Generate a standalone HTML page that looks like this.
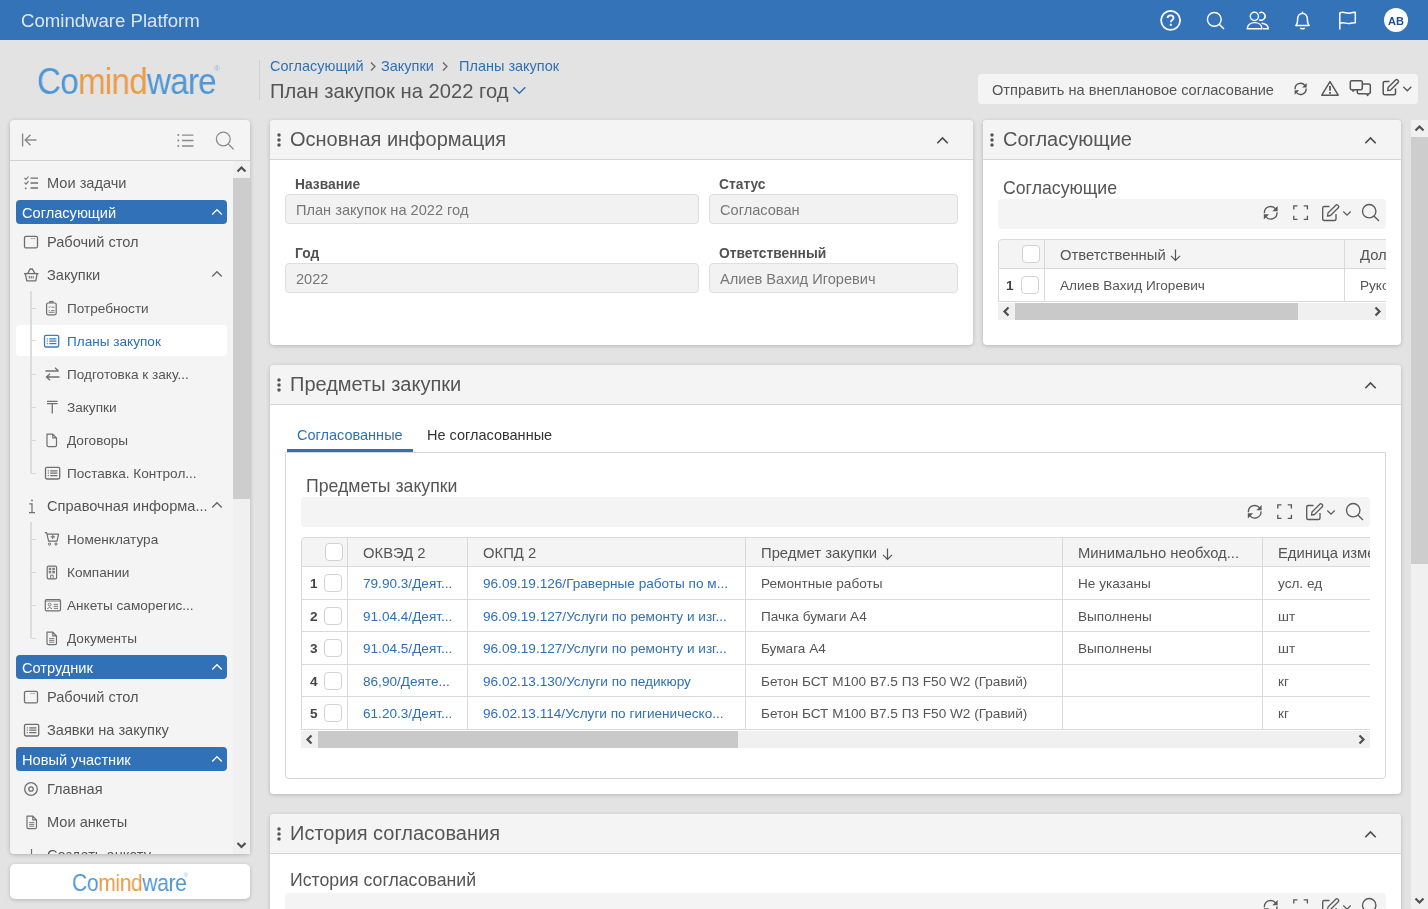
<!DOCTYPE html>
<html><head><meta charset="utf-8"><style>
html,body{margin:0;padding:0}
body{width:1428px;height:909px;overflow:hidden;background:#e3e3e3;position:relative;font-family:"Liberation Sans", sans-serif}
.t{position:absolute;white-space:nowrap;will-change:transform}
.b{position:absolute;box-sizing:border-box}
.i{position:absolute;overflow:visible}
</style></head><body>
<div class="b" style="left:0px;top:0px;width:1428px;height:40px;background:#3473b8"></div>
<div class="t" style="left:20.5px;top:9.06px;font-size:18.6px;line-height:23px;color:#dbe6f3;font-weight:400;">Comindware Platform</div>
<svg class="i" style="left:1158px;top:8px;" width="26" height="26" viewBox="0 0 26 26"><circle cx="12.6" cy="12.3" r="9.5" fill="none" stroke="#fff" stroke-width="1.8"/><path d="M9.6 10.1 C9.6 8.2 11 7.3 12.6 7.3 C14.3 7.3 15.5 8.4 15.5 9.9 C15.5 11.9 12.8 12.1 12.8 14.3" fill="none" stroke="#fff" stroke-width="1.8"/><rect x="11.8" y="15.8" width="2" height="2" fill="#fff"/></svg>
<svg class="i" style="left:1204px;top:9px;" width="24" height="24" viewBox="0 0 24 24"><circle cx="10.3" cy="10.3" r="6.9" fill="none" stroke="#fff" stroke-width="1.45"/><path d="M15.2 15.2 L20 20" stroke="#fff" stroke-width="1.45"/></svg>
<svg class="i" style="left:1244px;top:9px;" width="28" height="24" viewBox="0 0 28 24"><circle cx="10.4" cy="7.3" r="4.1" fill="none" stroke="#fff" stroke-width="1.45"/><path d="M15.2 4 A3.9 3.9 0 1 1 15.2 10.6" fill="none" stroke="#fff" stroke-width="1.45"/><path d="M3.3 19.8 C3.3 15.8 6.5 13.6 10.6 13.6 C14.7 13.6 17.9 15.8 17.9 19.8 Z" fill="none" stroke="#fff" stroke-width="1.45" stroke-linejoin="round"/><path d="M17.6 14.3 C21.6 14.7 24.2 16.6 24.2 19.8 L19 19.8" fill="none" stroke="#fff" stroke-width="1.45"/></svg>
<svg class="i" style="left:1292px;top:9px;" width="22" height="24" viewBox="0 0 22 24"><path d="M3.8 16.5 C5.2 15.2 5.6 13.5 5.6 10.5 C5.6 7 7.6 4.6 10.5 4.4 C13.4 4.6 15.4 7 15.4 10.5 C15.4 13.5 15.8 15.2 17.2 16.5 Z" fill="none" stroke="#fff" stroke-width="1.45" stroke-linejoin="round"/><path d="M10.5 2.6 L10.5 4.4" stroke="#fff" stroke-width="1.45"/><path d="M8.4 18.8 C8.9 20.2 12.1 20.2 12.6 18.8" fill="none" stroke="#fff" stroke-width="1.5"/></svg>
<svg class="i" style="left:1336px;top:9px;" width="24" height="24" viewBox="0 0 24 24"><path d="M3.8 20.5 L3.8 3.5" stroke="#fff" stroke-width="1.5"/><path d="M3.8 4 C7.5 1.8 10.5 5 14 4 C16 3.5 17 3.2 19.3 3.3 L19.3 13.7 C17 13.6 16 13.9 14 14.4 C10.5 15.4 7.5 12.2 3.8 14.4" fill="none" stroke="#fff" stroke-width="1.5" stroke-linejoin="round"/></svg>
<div class="b" style="left:1384px;top:8px;width:24px;height:24px;border-radius:50%;background:#fff"></div>
<div class="t" style="left:1396px;top:13.79px;font-size:11px;line-height:14px;color:#1f4f88;font-weight:700;width:24px;margin-left:-12px;text-align:center;">AB</div>
<div class="t" style="left:37px;top:60px;font-size:36px;line-height:44px;transform:scaleX(0.922);transform-origin:0 0;letter-spacing:-0.8px;color:#4f96d6">Co<span style="color:#ec9b47">mind</span>ware</div>
<div class="t" style="left:214px;top:64px;font-size:8px;line-height:10px;color:#8cb8e4">&#174;</div>
<div class="b" style="left:259px;top:60px;width:1px;height:40px;background:#d2d2d2"></div>
<div class="t" style="left:269.5px;top:56.78px;font-size:14.5px;line-height:18px;color:#2f70b5;font-weight:400;">Согласующий</div>
<svg class="i" style="left:368px;top:59px;" width="10" height="14" viewBox="0 0 10 14"><path d="M3 3.5 L7 7.5 L3 11.5" fill="none" stroke="#666" stroke-width="1.3"/></svg>
<div class="t" style="left:380.5px;top:56.78px;font-size:14.5px;line-height:18px;color:#2f70b5;font-weight:400;">Закупки</div>
<svg class="i" style="left:440px;top:59px;" width="10" height="14" viewBox="0 0 10 14"><path d="M3 3.5 L7 7.5 L3 11.5" fill="none" stroke="#666" stroke-width="1.3"/></svg>
<div class="t" style="left:458.5px;top:56.78px;font-size:14.5px;line-height:18px;color:#2f70b5;font-weight:400;">Планы закупок</div>
<div class="t" style="left:269.5px;top:78.80px;font-size:20.2px;line-height:25px;color:#555;font-weight:400;">План закупок на 2022 год</div>
<svg class="i" style="left:511px;top:84px;" width="16" height="12" viewBox="0 0 16 12"><path d="M2.3 3.3 L8.3 9.3 L14.3 3.3" fill="none" stroke="#2f70b5" stroke-width="1.5"/></svg>
<div class="b" style="left:978px;top:74px;width:440px;height:30px;background:#f4f4f4;border-radius:4px"></div>
<div class="t" style="left:991.5px;top:80.54px;font-size:14.6px;line-height:18px;color:#555;font-weight:400;">Отправить на внеплановое согласование</div>
<div class="b" style="left:1411px;top:120px;width:17px;height:789px;background:#f0f0f0"></div>
<div class="b" style="left:1411px;top:137px;width:17px;height:427px;background:#cdcdcd"></div>
<svg class="i" style="left:1411px;top:120px;" width="17" height="17" viewBox="0 0 17 17"><path d="M4.5 10.5 L8.5 6.5 L12.5 10.5" fill="none" stroke="#505050" stroke-width="2.2"/></svg>
<svg class="i" style="left:1411px;top:892px;" width="17" height="17" viewBox="0 0 17 17"><path d="M4.5 6.5 L8.5 10.5 L12.5 6.5" fill="none" stroke="#505050" stroke-width="2.2"/></svg>
<svg class="i" style="left:1293px;top:81px;" width="16" height="16" viewBox="0 0 16 16"><path d="M2.1 8.2 A5.5 5.5 0 0 1 11.9 4.4" fill="none" stroke="#555" stroke-width="1.35"/><path d="M13.1 7.5 A5.5 5.5 0 0 1 3.3 11.3" fill="none" stroke="#555" stroke-width="1.35"/><path d="M13.7 1.9 L13.7 6.5 L9.1 6.5 Z" fill="#555"/><path d="M1.6 13.8 L1.6 9.2 L6.2 9.2 Z" fill="#555"/></svg>
<svg class="i" style="left:1320px;top:79px;" width="20" height="18" viewBox="0 0 20 18"><path d="M10 2.6 L18.2 16.2 H1.8 Z" fill="none" stroke="#555" stroke-width="1.45" stroke-linejoin="round"/><path d="M10 7 V11.8" stroke="#555" stroke-width="1.8"/><rect x="9.1" y="13" width="1.8" height="1.8" fill="#555"/></svg>
<svg class="i" style="left:1349px;top:79px;" width="24" height="20" viewBox="0 0 24 20"><path d="M2.8 1.8 H11.8 Q13.3 1.8 13.3 3.3 V9.2 Q13.3 10.7 11.8 10.7 H5.5 L4 12.2 L4 10.7 H2.8 Q1.3 10.7 1.3 9.2 V3.3 Q1.3 1.8 2.8 1.8 Z" fill="none" stroke="#555" stroke-width="1.5" stroke-linejoin="round"/><path d="M13.3 5 H19.8 Q21.3 5 21.3 6.5 V13.3 Q21.3 14.8 19.8 14.8 H18.8 L18.8 16.5 L17 14.8 H9.8 Q8.3 14.8 8.3 13.3 V10.7" fill="none" stroke="#555" stroke-width="1.5" stroke-linejoin="round"/></svg>
<svg class="i" style="left:1381px;top:78px;" width="20" height="20" viewBox="0 0 20 20"><path d="M8.5 3.5 H3.7 Q2.2 3.5 2.2 5 V15.2 Q2.2 16.7 3.7 16.7 H13 Q14.5 16.7 14.5 15.2 V10.5" fill="none" stroke="#555" stroke-width="1.5"/><path d="M6.7 12.6 L7.1 9.6 L14.6 2.1 Q15.6 1.1 16.6 2.1 L17.1 2.6 Q18.1 3.6 17.1 4.6 L9.6 12.1 Z" fill="none" stroke="#555" stroke-width="1.4" stroke-linejoin="round"/></svg>
<svg class="i" style="left:1402px;top:85px;" width="12" height="9" viewBox="0 0 12 9"><path d="M1.3 1.8 L5.3 5.8 L9.3 1.8" fill="none" stroke="#555" stroke-width="1.3"/></svg>
<div class="b" style="left:10px;top:120px;width:240px;height:734px;background:#f4f4f4;border-radius:4px;box-shadow:0 1px 4px rgba(0,0,0,0.22);overflow:hidden">
<div class="b" style="left:0;top:40px;width:240px;height:1px;background:#d2d2d2"></div>
</div>
<svg class="i" style="left:20px;top:131px;" width="20" height="18" viewBox="0 0 20 18"><path d="M2.6 2.5 L2.6 15.5" stroke="#8a8a8a" stroke-width="1.4"/><path d="M16.5 9 L5.2 9 M10.5 3.7 L5.2 9 L10.5 14.3" fill="none" stroke="#8a8a8a" stroke-width="1.4"/></svg>
<svg class="i" style="left:175px;top:131px;" width="22" height="18" viewBox="0 0 22 18"><circle cx="3.3" cy="4.1" r="1" fill="#8a8a8a"/><circle cx="3.3" cy="9.5" r="1" fill="#8a8a8a"/><circle cx="3.3" cy="15" r="1" fill="#8a8a8a"/><path d="M7 4.1 H18.5 M7 9.5 H18.5 M7 15 H18.5" stroke="#8a8a8a" stroke-width="1.3"/></svg>
<svg class="i" style="left:214px;top:130px;" width="22" height="22" viewBox="0 0 22 22"><circle cx="9.3" cy="9" r="6.9" fill="none" stroke="#8a8a8a" stroke-width="1.3"/><path d="M14.2 13.9 L19.5 19.2" stroke="#8a8a8a" stroke-width="1.3"/></svg>
<div class="b" style="left:233px;top:161px;width:17px;height:693px;background:#f0f0f0"></div>
<div class="b" style="left:233px;top:178px;width:18px;height:321px;background:#cdcdcd"></div>
<svg class="i" style="left:233px;top:161px;" width="17" height="17" viewBox="0 0 17 17"><path d="M4.5 10.5 L8.5 6.5 L12.5 10.5" fill="none" stroke="#505050" stroke-width="2.2"/></svg>
<svg class="i" style="left:233px;top:837px;" width="17" height="17" viewBox="0 0 17 17"><path d="M4.5 6 L8.5 10 L12.5 6" fill="none" stroke="#505050" stroke-width="2.2"/></svg>
<div style="position:absolute;left:0;top:0;width:1428px;height:909px;clip-path:inset(160px 1195px 55px 10px)">
<svg class="i" style="left:22.5px;top:173.5px;" width="18" height="18" viewBox="0 0 18 18"><path d="M1.5 4 L3 5.5 L5.5 2.5 M1.5 8.7 L3 10.2 L5.5 7.2" fill="none" stroke="#6f6f6f" stroke-width="1.1"/><circle cx="2.7" cy="14.3" r="0.9" fill="#6f6f6f"/><path d="M7.5 4.2 H15 M7.5 9 H15 M7.5 14 H15" stroke="#6f6f6f" stroke-width="1.3"/></svg>
<div class="t" style="left:46.5px;top:174.24px;font-size:14.6px;line-height:18px;color:#555;font-weight:400;">Мои задачи</div>
<div class="b" style="left:16px;top:200px;width:211px;height:24px;background:#3171b7;border-radius:4px"></div>
<div class="t" style="left:21.5px;top:203.54px;font-size:14.6px;line-height:18px;color:#fff;font-weight:400;">Согласующий</div>
<svg class="i" style="left:211px;top:207px;" width="12" height="10" viewBox="0 0 12 10"><path d="M1.2 7.5 L6 2.7 L10.8 7.5" fill="none" stroke="#fff" stroke-width="1.3"/></svg>
<svg class="i" style="left:22.5px;top:232.5px;" width="18" height="18" viewBox="0 0 18 18"><rect x="1.5" y="3.3" width="13" height="11.6" rx="1.5" fill="none" stroke="#6f6f6f" stroke-width="1.3"/><path d="M9.5 5.6 H10.3 M11.3 5.6 H12.1 M7.7 5.6 H8.5" stroke="#6f6f6f" stroke-width="1"/></svg>
<div class="t" style="left:46.5px;top:233.24px;font-size:14.6px;line-height:18px;color:#555;font-weight:400;">Рабочий стол</div>
<svg class="i" style="left:22.5px;top:265.5px;" width="18" height="18" viewBox="0 0 18 18"><path d="M1 7.6 H15.5" stroke="#6f6f6f" stroke-width="1.3"/><path d="M2.3 7.6 L3.8 14.8 H12.7 L14.2 7.6" fill="none" stroke="#6f6f6f" stroke-width="1.3" stroke-linejoin="round"/><path d="M4.7 7.4 L7.2 3 H9.3 L11.8 7.4" fill="none" stroke="#6f6f6f" stroke-width="1.3"/><path d="M6.3 10 V12.5 M8.25 10 V12.5 M10.2 10 V12.5" stroke="#6f6f6f" stroke-width="1.1"/></svg>
<div class="t" style="left:46.5px;top:266.24px;font-size:14.6px;line-height:18px;color:#555;font-weight:400;">Закупки</div>
<svg class="i" style="left:210.5px;top:269.0px;" width="12" height="10" viewBox="0 0 12 10"><path d="M1.2 7.5 L6 2.7 L10.8 7.5" fill="none" stroke="#666" stroke-width="1.3"/></svg>
<div class="b" style="left:30px;top:291px;width:1.5px;height:182px;background:#dcdcdc"></div>
<div class="b" style="left:31px;top:307.5px;width:5px;height:1.0px;background:#d8d8d8"></div>
<svg class="i" style="left:45.0px;top:298.5px;" width="14" height="18" viewBox="0 0 14 18"><rect x="1.6" y="4" width="9.6" height="11.8" rx="1.5" fill="none" stroke="#6f6f6f" stroke-width="1.2"/><path d="M4.8 4 V2.6 H8 V4" fill="none" stroke="#6f6f6f" stroke-width="1.1"/><path d="M3.6 7.8 L4.3 8.5 L5.5 7.2 M6.5 8.2 H9.5 M3.6 11.6 H4.6 M6.2 11.6 H9.5 M3.6 13.3 H9.5" fill="none" stroke="#6f6f6f" stroke-width="0.9"/></svg>
<div class="t" style="left:66.5px;top:300.09px;font-size:13.6px;line-height:17px;color:#555;font-weight:400;">Потребности</div>
<div class="b" style="left:16px;top:325px;width:211px;height:31px;background:#fff;border-radius:4px"></div>
<div class="b" style="left:31px;top:340px;width:5px;height:1px;background:#d8d8d8"></div>
<svg class="i" style="left:43px;top:331.5px;" width="18" height="18" viewBox="0 0 18 18"><rect x="1.5" y="3.4" width="14.2" height="11.6" rx="1.4" fill="none" stroke="#3a7cc2" stroke-width="1.3"/><path d="M3.8 6.8 H4.8 M3.8 9.2 H4.8 M3.8 11.6 H4.8 M6.2 6.8 H13.4 M6.2 9.2 H13.4 M6.2 11.6 H13.4" stroke="#3a7cc2" stroke-width="1.2"/></svg>
<div class="t" style="left:66.5px;top:333.29px;font-size:13.6px;line-height:17px;color:#2f70b5;font-weight:400;">Планы закупок</div>
<div class="b" style="left:30px;top:291px;width:1.5px;height:65px;background:#dcdcdc"></div>
<div class="b" style="left:31px;top:373.5px;width:5px;height:1.0px;background:#d8d8d8"></div>
<svg class="i" style="left:43.5px;top:364.5px;" width="18" height="18" viewBox="0 0 18 18"><path d="M1.5 6 H14.5 M11 2.8 L14.5 6 M15.5 12 H2.5 M6 8.8 L2.5 12 L6 15.2" fill="none" stroke="#6f6f6f" stroke-width="1.3"/></svg>
<div class="t" style="left:66.5px;top:366.09px;font-size:13.6px;line-height:17px;color:#555;font-weight:400;">Подготовка к заку...</div>
<div class="b" style="left:31px;top:406.5px;width:5px;height:1.0px;background:#d8d8d8"></div>
<svg class="i" style="left:45.0px;top:397.5px;" width="14" height="18" viewBox="0 0 14 18"><path d="M2 3.3 H12.5 M2 5.6 H12.5 M7.25 5.6 V15.5" fill="none" stroke="#6f6f6f" stroke-width="1.3"/></svg>
<div class="t" style="left:66.5px;top:399.09px;font-size:13.6px;line-height:17px;color:#555;font-weight:400;">Закупки</div>
<div class="b" style="left:31px;top:439.5px;width:5px;height:1.0px;background:#d8d8d8"></div>
<svg class="i" style="left:45.0px;top:430.5px;" width="14" height="18" viewBox="0 0 14 18"><path d="M2 3.2 H7.8 L11.5 6.9 V14.3 Q11.5 15.6 10.2 15.6 H3.3 Q2 15.6 2 14.3 Z M7.8 3.2 V6.9 H11.5" fill="none" stroke="#6f6f6f" stroke-width="1.2" stroke-linejoin="round"/></svg>
<div class="t" style="left:66.5px;top:432.09px;font-size:13.6px;line-height:17px;color:#555;font-weight:400;">Договоры</div>
<div class="b" style="left:31px;top:472.5px;width:5px;height:1.0px;background:#d8d8d8"></div>
<svg class="i" style="left:43.5px;top:463.5px;" width="18" height="18" viewBox="0 0 18 18"><rect x="1.5" y="3.4" width="14.2" height="11.6" rx="1.4" fill="none" stroke="#6f6f6f" stroke-width="1.3"/><path d="M3.8 6.8 H4.8 M3.8 9.2 H4.8 M3.8 11.6 H4.8 M6.2 6.8 H13.4 M6.2 9.2 H13.4 M6.2 11.6 H13.4" stroke="#6f6f6f" stroke-width="1.2"/></svg>
<div class="t" style="left:66.5px;top:465.09px;font-size:13.6px;line-height:17px;color:#555;font-weight:400;">Поставка. Контрол...</div>
<svg class="i" style="left:22.5px;top:496.5px;" width="14" height="18" viewBox="0 0 14 18"><circle cx="9" cy="3.4" r="0.9" fill="#6f6f6f"/><path d="M6.3 6.8 H9 V15.6 M6 15.6 H12" fill="none" stroke="#6f6f6f" stroke-width="1.2"/></svg>
<div class="t" style="left:46.5px;top:497.24px;font-size:14.6px;line-height:18px;color:#555;font-weight:400;">Справочная информа...</div>
<svg class="i" style="left:210.5px;top:500.0px;" width="12" height="10" viewBox="0 0 12 10"><path d="M1.2 7.5 L6 2.7 L10.8 7.5" fill="none" stroke="#666" stroke-width="1.3"/></svg>
<div class="b" style="left:30px;top:522px;width:1.5px;height:116px;background:#dcdcdc"></div>
<div class="b" style="left:31px;top:538.5px;width:5px;height:1.0px;background:#d8d8d8"></div>
<svg class="i" style="left:43.5px;top:529.5px;" width="18" height="18" viewBox="0 0 18 18"><path d="M0.8 2.6 H2.6 L4.6 11.2 H13 L14.6 4.2 H3.4" fill="none" stroke="#6f6f6f" stroke-width="1.2" stroke-linejoin="round"/><path d="M8.8 4.8 V9 M6.7 6.9 H10.9" stroke="#6f6f6f" stroke-width="1.1"/><circle cx="5.5" cy="14" r="1.1" fill="none" stroke="#6f6f6f" stroke-width="1"/><circle cx="12" cy="14" r="1.1" fill="none" stroke="#6f6f6f" stroke-width="1"/></svg>
<div class="t" style="left:66.5px;top:531.09px;font-size:13.6px;line-height:17px;color:#555;font-weight:400;">Номенклатура</div>
<div class="b" style="left:31px;top:571.5px;width:5px;height:1.0px;background:#d8d8d8"></div>
<svg class="i" style="left:45.0px;top:562.5px;" width="14" height="18" viewBox="0 0 14 18"><rect x="2.2" y="3.2" width="9.4" height="12.6" rx="1.3" fill="none" stroke="#6f6f6f" stroke-width="1.2"/><rect x="4.2" y="5.2" width="1.6" height="1.6" fill="none" stroke="#6f6f6f" stroke-width="0.8"/><rect x="7.8" y="5.2" width="1.6" height="1.6" fill="none" stroke="#6f6f6f" stroke-width="0.8"/><rect x="4.2" y="8.3" width="1.6" height="1.6" fill="none" stroke="#6f6f6f" stroke-width="0.8"/><rect x="7.8" y="8.3" width="1.6" height="1.6" fill="none" stroke="#6f6f6f" stroke-width="0.8"/><path d="M5.6 15.6 V12.2 H8.2 V15.6" fill="none" stroke="#6f6f6f" stroke-width="0.9"/></svg>
<div class="t" style="left:66.5px;top:564.09px;font-size:13.6px;line-height:17px;color:#555;font-weight:400;">Компании</div>
<div class="b" style="left:31px;top:604.5px;width:5px;height:1.0px;background:#d8d8d8"></div>
<svg class="i" style="left:43.5px;top:595.5px;" width="18" height="18" viewBox="0 0 18 18"><rect x="1.3" y="3.6" width="15.2" height="11.2" rx="1.3" fill="none" stroke="#6f6f6f" stroke-width="1.2"/><path d="M1.3 5.1 H16.5" stroke="#6f6f6f" stroke-width="0.8"/><circle cx="5.6" cy="8.6" r="1.4" fill="none" stroke="#6f6f6f" stroke-width="0.9"/><path d="M3.2 12.8 Q5.6 9.9 8 12.8 M9.8 8.4 H14 M9.8 10.4 H14 M9.8 12.4 H14" fill="none" stroke="#6f6f6f" stroke-width="0.9"/></svg>
<div class="t" style="left:66.5px;top:597.09px;font-size:13.6px;line-height:17px;color:#555;font-weight:400;">Анкеты саморегис...</div>
<div class="b" style="left:31px;top:637.5px;width:5px;height:1.0px;background:#d8d8d8"></div>
<svg class="i" style="left:45.0px;top:628.5px;" width="14" height="18" viewBox="0 0 14 18"><path d="M2 3.2 H7.8 L11.5 6.9 V14.3 Q11.5 15.6 10.2 15.6 H3.3 Q2 15.6 2 14.3 Z M7.8 3.2 V6.9 H11.5" fill="none" stroke="#6f6f6f" stroke-width="1.2" stroke-linejoin="round"/><path d="M4.2 9.6 H9.3 M4.2 11.4 H9.3 M4.2 13.2 H9.3" stroke="#6f6f6f" stroke-width="0.9"/></svg>
<div class="t" style="left:66.5px;top:630.09px;font-size:13.6px;line-height:17px;color:#555;font-weight:400;">Документы</div>
<div class="b" style="left:16px;top:655px;width:211px;height:24px;background:#3171b7;border-radius:4px"></div>
<div class="t" style="left:21.5px;top:658.54px;font-size:14.6px;line-height:18px;color:#fff;font-weight:400;">Сотрудник</div>
<svg class="i" style="left:211px;top:662px;" width="12" height="10" viewBox="0 0 12 10"><path d="M1.2 7.5 L6 2.7 L10.8 7.5" fill="none" stroke="#fff" stroke-width="1.3"/></svg>
<svg class="i" style="left:22.5px;top:687.5px;" width="18" height="18" viewBox="0 0 18 18"><rect x="1.5" y="3.3" width="13" height="11.6" rx="1.5" fill="none" stroke="#6f6f6f" stroke-width="1.3"/><path d="M9.5 5.6 H10.3 M11.3 5.6 H12.1 M7.7 5.6 H8.5" stroke="#6f6f6f" stroke-width="1"/></svg>
<div class="t" style="left:46.5px;top:688.24px;font-size:14.6px;line-height:18px;color:#555;font-weight:400;">Рабочий стол</div>
<svg class="i" style="left:22.5px;top:720.5px;" width="18" height="18" viewBox="0 0 18 18"><rect x="1.5" y="3.4" width="14.2" height="11.6" rx="1.4" fill="none" stroke="#6f6f6f" stroke-width="1.3"/><path d="M3.8 6.8 H4.8 M3.8 9.2 H4.8 M3.8 11.6 H4.8 M6.2 6.8 H13.4 M6.2 9.2 H13.4 M6.2 11.6 H13.4" stroke="#6f6f6f" stroke-width="1.2"/></svg>
<div class="t" style="left:46.5px;top:721.24px;font-size:14.6px;line-height:18px;color:#555;font-weight:400;">Заявки на закупку</div>
<div class="b" style="left:16px;top:747px;width:211px;height:24px;background:#3171b7;border-radius:4px"></div>
<div class="t" style="left:21.5px;top:750.54px;font-size:14.6px;line-height:18px;color:#fff;font-weight:400;">Новый участник</div>
<svg class="i" style="left:211px;top:754px;" width="12" height="10" viewBox="0 0 12 10"><path d="M1.2 7.5 L6 2.7 L10.8 7.5" fill="none" stroke="#fff" stroke-width="1.3"/></svg>
<svg class="i" style="left:22.5px;top:779.5px;" width="18" height="18" viewBox="0 0 18 18"><circle cx="8" cy="9" r="6.3" fill="none" stroke="#6f6f6f" stroke-width="1.3"/><circle cx="8" cy="9" r="2.2" fill="none" stroke="#6f6f6f" stroke-width="1.3"/></svg>
<div class="t" style="left:46.5px;top:780.24px;font-size:14.6px;line-height:18px;color:#555;font-weight:400;">Главная</div>
<svg class="i" style="left:24.5px;top:812.5px;" width="14" height="18" viewBox="0 0 14 18"><path d="M2 3.2 H7.8 L11.5 6.9 V14.3 Q11.5 15.6 10.2 15.6 H3.3 Q2 15.6 2 14.3 Z M7.8 3.2 V6.9 H11.5" fill="none" stroke="#6f6f6f" stroke-width="1.2" stroke-linejoin="round"/><path d="M4.2 9.6 H9.3 M4.2 11.4 H9.3 M4.2 13.2 H9.3" stroke="#6f6f6f" stroke-width="0.9"/></svg>
<div class="t" style="left:46.5px;top:813.24px;font-size:14.6px;line-height:18px;color:#555;font-weight:400;">Мои анкеты</div>
<svg class="i" style="left:24.5px;top:845.5px;" width="14" height="18" viewBox="0 0 14 18"><path d="M6.5 3 V15 M0.5 9 H12.5" stroke="#6f6f6f" stroke-width="1.2"/></svg>
<div class="t" style="left:46.5px;top:846.24px;font-size:14.6px;line-height:18px;color:#555;font-weight:400;">Создать анкету</div>
</div>
<div class="b" style="left:10px;top:864px;width:240px;height:35px;background:#fff;border-radius:5px;box-shadow:0 1px 4px rgba(0,0,0,0.2)"></div>
<div class="t" style="left:71.5px;top:867.5px;font-size:24px;line-height:30px;transform:scaleX(0.876);transform-origin:0 0;letter-spacing:-0.4px;color:#4f96d6">Co<span style="color:#ec9b47">mind</span>ware</div>
<div class="t" style="left:184px;top:872px;font-size:5px;line-height:6px;color:#8cb8e4">&#174;</div>
<div class="b" style="left:270px;top:120px;width:703px;height:225px;background:#fff;border-radius:4px;box-shadow:0 1px 4px rgba(0,0,0,0.2);overflow:hidden"><div class="b" style="left:0;top:0;width:100%;height:40px;background:#f4f4f4;border-bottom:1px solid #d6d6d6"></div></div>
<svg class="i" style="left:276px;top:131px;" width="6" height="18" viewBox="0 0 6 18"><circle cx="3" cy="3.9" r="1.75" fill="#555"/><circle cx="3" cy="9" r="1.75" fill="#555"/><circle cx="3" cy="14.1" r="1.75" fill="#555"/></svg>
<div class="t" style="left:290px;top:127.17px;font-size:20px;line-height:25px;color:#555;font-weight:400;">Основная информация</div>
<svg class="i" style="left:936px;top:134px;" width="14" height="12" viewBox="0 0 14 12"><path d="M1.3 9.2 L6.5 4 L11.7 9.2" fill="none" stroke="#4a4a4a" stroke-width="1.6"/></svg>
<div class="t" style="left:295.3px;top:175.52px;font-size:13.8px;line-height:17px;color:#525252;font-weight:700;">Название</div>
<div class="b" style="left:285px;top:194px;width:414px;height:30px;background:#f2f2f2;border:1px solid #dedede;border-radius:4px"></div>
<div class="t" style="left:295.9px;top:200.84px;font-size:14.6px;line-height:18px;color:#777;font-weight:400;">План закупок на 2022 год</div>
<div class="t" style="left:719.3px;top:175.52px;font-size:13.8px;line-height:17px;color:#525252;font-weight:700;">Статус</div>
<div class="b" style="left:709px;top:194px;width:249px;height:30px;background:#f2f2f2;border:1px solid #dedede;border-radius:4px"></div>
<div class="t" style="left:719.9px;top:200.84px;font-size:14.6px;line-height:18px;color:#777;font-weight:400;">Согласован</div>
<div class="t" style="left:295.3px;top:244.52px;font-size:13.8px;line-height:17px;color:#525252;font-weight:700;">Год</div>
<div class="b" style="left:285px;top:263px;width:414px;height:30px;background:#f2f2f2;border:1px solid #dedede;border-radius:4px"></div>
<div class="t" style="left:295.9px;top:269.84px;font-size:14.6px;line-height:18px;color:#777;font-weight:400;">2022</div>
<div class="t" style="left:719.3px;top:244.52px;font-size:13.8px;line-height:17px;color:#525252;font-weight:700;">Ответственный</div>
<div class="b" style="left:709px;top:263px;width:249px;height:30px;background:#f2f2f2;border:1px solid #dedede;border-radius:4px"></div>
<div class="t" style="left:719.9px;top:269.84px;font-size:14.6px;line-height:18px;color:#777;font-weight:400;">Алиев Вахид Игоревич</div>
<div class="b" style="left:983px;top:120px;width:418px;height:225px;background:#fff;border-radius:4px;box-shadow:0 1px 4px rgba(0,0,0,0.2);overflow:hidden"><div class="b" style="left:0;top:0;width:100%;height:40px;background:#f4f4f4;border-bottom:1px solid #d6d6d6"></div></div>
<svg class="i" style="left:989px;top:131px;" width="6" height="18" viewBox="0 0 6 18"><circle cx="3" cy="3.9" r="1.75" fill="#555"/><circle cx="3" cy="9" r="1.75" fill="#555"/><circle cx="3" cy="14.1" r="1.75" fill="#555"/></svg>
<div class="t" style="left:1003px;top:127.17px;font-size:20px;line-height:25px;color:#555;font-weight:400;">Согласующие</div>
<svg class="i" style="left:1364px;top:134px;" width="14" height="12" viewBox="0 0 14 12"><path d="M1.3 9.2 L6.5 4 L11.7 9.2" fill="none" stroke="#4a4a4a" stroke-width="1.6"/></svg>
<div class="t" style="left:1002.5px;top:176.67px;font-size:17.7px;line-height:22px;color:#555;font-weight:400;">Согласующие</div>
<div class="b" style="left:998px;top:199px;width:388px;height:30px;background:#f4f4f4;border-radius:4px"></div>
<svg class="i" style="left:1262px;top:204px;" width="18" height="18" viewBox="0 0 18 18"><path d="M2.4 9.2 A6.3 6.3 0 0 1 13.6 4.9" fill="none" stroke="#5a5a5a" stroke-width="1.35"/><path d="M15 8.4 A6.3 6.3 0 0 1 3.8 12.7" fill="none" stroke="#5a5a5a" stroke-width="1.35"/><path d="M15.6 2.0 L15.6 7.3 L10.3 7.3 Z" fill="#5a5a5a"/><path d="M1.8 15.6 L1.8 10.3 L7.1 10.3 Z" fill="#5a5a5a"/></svg>
<svg class="i" style="left:1292px;top:204px;" width="18" height="18" viewBox="0 0 18 18"><path d="M1.8 5.5 V1.8 H5.5 M11.7 1.8 H15.4 V5.5 M15.4 11.7 V15.4 H11.7 M5.5 15.4 H1.8 V11.7" fill="none" stroke="#5a5a5a" stroke-width="1.35"/></svg>
<svg class="i" style="left:1321px;top:203px;" width="20" height="20" viewBox="0 0 20 20"><path d="M8.5 3.5 H3.2 Q1.7 3.5 1.7 5 V16 Q1.7 17.5 3.2 17.5 H13.5 Q15 17.5 15 16 V11" fill="none" stroke="#5a5a5a" stroke-width="1.35"/><path d="M6.5 13.2 L7 10 L14.8 2.2 Q15.8 1.2 16.8 2.2 L17.3 2.7 Q18.3 3.7 17.3 4.7 L9.5 12.5 Z" fill="none" stroke="#5a5a5a" stroke-width="1.3" stroke-linejoin="round"/></svg>
<svg class="i" style="left:1342px;top:210px;" width="12" height="8" viewBox="0 0 12 8"><path d="M1.3 1.5 L5 5.2 L8.7 1.5" fill="none" stroke="#5a5a5a" stroke-width="1.2"/></svg>
<svg class="i" style="left:1361px;top:203px;" width="20" height="20" viewBox="0 0 20 20"><circle cx="8.2" cy="8.2" r="6.7" fill="none" stroke="#5a5a5a" stroke-width="1.35"/><path d="M12.9 12.9 L18 18" stroke="#5a5a5a" stroke-width="1.35"/></svg>
<div style="position:absolute;left:0;top:0;width:1428px;height:909px;clip-path:inset(239px 42px 607px 998px)">
<div class="b" style="left:998px;top:239px;width:402px;height:30px;background:#f4f4f4;border:1px solid #d9d9d9;border-radius:4px 0 0 0"></div>
<div class="b" style="left:998px;top:269px;width:402px;height:33px;background:#fff;border:1px solid #d9d9d9;border-top:none"></div>
<div class="b" style="left:1044px;top:239px;width:1px;height:63px;background:#d9d9d9"></div>
<div class="b" style="left:1344px;top:239px;width:1px;height:63px;background:#d9d9d9"></div>
<div class="b" style="left:1022px;top:245px;width:18px;height:18px;background:#fff;border:1px solid #d2d2d2;border-radius:4px"></div>
<div class="t" style="left:1060px;top:245.67px;font-size:14.8px;line-height:18px;color:#555;font-weight:400;">Ответственный</div>
<svg class="i" style="left:1169px;top:248px;" width="14" height="14" viewBox="0 0 14 14"><path d="M6.5 1.5 V12 M2 7.8 L6.5 12.3 L11 7.8" fill="none" stroke="#555" stroke-width="1.2"/></svg>
<div class="t" style="left:1360px;top:245.67px;font-size:14.8px;line-height:18px;color:#555;font-weight:400;">Должность</div>
<div class="t" style="left:1005.5px;top:277.09px;font-size:13.6px;line-height:17px;color:#444;font-weight:700;">1</div>
<div class="b" style="left:1021px;top:276px;width:18px;height:18px;background:#fff;border:1px solid #d2d2d2;border-radius:4px"></div>
<div class="t" style="left:1060px;top:277.09px;font-size:13.6px;line-height:17px;color:#555;font-weight:400;">Алиев Вахид Игоревич</div>
<div class="t" style="left:1360px;top:277.09px;font-size:13.6px;line-height:17px;color:#555;font-weight:400;">Руководитель</div>
</div>
<div class="b" style="left:998px;top:303px;width:388px;height:17px;background:#f0f0f0"></div>
<div class="b" style="left:1015px;top:303px;width:283px;height:17px;background:#c9c9c9"></div>
<svg class="i" style="left:998px;top:303px;" width="17" height="17" viewBox="0 0 17 17"><path d="M10.5 4.5 L6.5 8.5 L10.5 12.5" fill="none" stroke="#4f4f4f" stroke-width="2.2"/></svg>
<svg class="i" style="left:1369px;top:303px;" width="17" height="17" viewBox="0 0 17 17"><path d="M6.5 4.5 L10.5 8.5 L6.5 12.5" fill="none" stroke="#4f4f4f" stroke-width="2.2"/></svg>
<div class="b" style="left:270px;top:365px;width:1131px;height:429px;background:#fff;border-radius:4px;box-shadow:0 1px 4px rgba(0,0,0,0.2);overflow:hidden"><div class="b" style="left:0;top:0;width:100%;height:40px;background:#f4f4f4;border-bottom:1px solid #d6d6d6"></div></div>
<svg class="i" style="left:276px;top:376px;" width="6" height="18" viewBox="0 0 6 18"><circle cx="3" cy="3.9" r="1.75" fill="#555"/><circle cx="3" cy="9" r="1.75" fill="#555"/><circle cx="3" cy="14.1" r="1.75" fill="#555"/></svg>
<div class="t" style="left:290px;top:372.17px;font-size:20px;line-height:25px;color:#555;font-weight:400;">Предметы закупки</div>
<svg class="i" style="left:1364px;top:379px;" width="14" height="12" viewBox="0 0 14 12"><path d="M1.3 9.2 L6.5 4 L11.7 9.2" fill="none" stroke="#4a4a4a" stroke-width="1.6"/></svg>
<div class="t" style="left:296.5px;top:426.48px;font-size:14.5px;line-height:18px;color:#2f70b5;font-weight:400;">Согласованные</div>
<div class="t" style="left:426.5px;top:426.48px;font-size:14.5px;line-height:18px;color:#333;font-weight:400;">Не согласованные</div>
<div class="b" style="left:285px;top:452px;width:1101px;height:327px;border:1px solid #d6d6d6;border-radius:0 0 4px 4px"></div>
<div class="b" style="left:287px;top:449px;width:126px;height:3px;background:#3171b7"></div>
<div class="t" style="left:305.5px;top:474.67px;font-size:17.7px;line-height:22px;color:#555;font-weight:400;">Предметы закупки</div>
<div class="b" style="left:301px;top:497px;width:1069px;height:30px;background:#f4f4f4;border-radius:4px"></div>
<svg class="i" style="left:1246px;top:503px;" width="18" height="18" viewBox="0 0 18 18"><path d="M2.4 9.2 A6.3 6.3 0 0 1 13.6 4.9" fill="none" stroke="#5a5a5a" stroke-width="1.35"/><path d="M15 8.4 A6.3 6.3 0 0 1 3.8 12.7" fill="none" stroke="#5a5a5a" stroke-width="1.35"/><path d="M15.6 2.0 L15.6 7.3 L10.3 7.3 Z" fill="#5a5a5a"/><path d="M1.8 15.6 L1.8 10.3 L7.1 10.3 Z" fill="#5a5a5a"/></svg>
<svg class="i" style="left:1276px;top:503px;" width="18" height="18" viewBox="0 0 18 18"><path d="M1.8 5.5 V1.8 H5.5 M11.7 1.8 H15.4 V5.5 M15.4 11.7 V15.4 H11.7 M5.5 15.4 H1.8 V11.7" fill="none" stroke="#5a5a5a" stroke-width="1.35"/></svg>
<svg class="i" style="left:1305px;top:502px;" width="20" height="20" viewBox="0 0 20 20"><path d="M8.5 3.5 H3.2 Q1.7 3.5 1.7 5 V16 Q1.7 17.5 3.2 17.5 H13.5 Q15 17.5 15 16 V11" fill="none" stroke="#5a5a5a" stroke-width="1.35"/><path d="M6.5 13.2 L7 10 L14.8 2.2 Q15.8 1.2 16.8 2.2 L17.3 2.7 Q18.3 3.7 17.3 4.7 L9.5 12.5 Z" fill="none" stroke="#5a5a5a" stroke-width="1.3" stroke-linejoin="round"/></svg>
<svg class="i" style="left:1326px;top:509px;" width="12" height="8" viewBox="0 0 12 8"><path d="M1.3 1.5 L5 5.2 L8.7 1.5" fill="none" stroke="#5a5a5a" stroke-width="1.2"/></svg>
<svg class="i" style="left:1345px;top:502px;" width="20" height="20" viewBox="0 0 20 20"><circle cx="8.2" cy="8.2" r="6.7" fill="none" stroke="#5a5a5a" stroke-width="1.35"/><path d="M12.9 12.9 L18 18" stroke="#5a5a5a" stroke-width="1.35"/></svg>
<div style="position:absolute;left:0;top:0;width:1428px;height:909px;clip-path:inset(537px 58px 178px 301px)">
<div class="b" style="left:301px;top:537px;width:1199px;height:30px;background:#f4f4f4;border:1px solid #d9d9d9;border-radius:4px 0 0 0"></div>
<div class="b" style="left:301px;top:567px;width:1199px;height:163px;background:#fff;border-left:1px solid #d9d9d9"></div>
<div class="b" style="left:301px;top:599px;width:1199px;height:1px;background:#d9d9d9"></div>
<div class="b" style="left:301px;top:631px;width:1199px;height:1px;background:#d9d9d9"></div>
<div class="b" style="left:301px;top:664px;width:1199px;height:1px;background:#d9d9d9"></div>
<div class="b" style="left:301px;top:696px;width:1199px;height:1px;background:#d9d9d9"></div>
<div class="b" style="left:301px;top:729px;width:1199px;height:1px;background:#d9d9d9"></div>
<div class="b" style="left:347px;top:537px;width:1px;height:193px;background:#d9d9d9"></div>
<div class="b" style="left:467px;top:537px;width:1px;height:193px;background:#d9d9d9"></div>
<div class="b" style="left:745px;top:537px;width:1px;height:193px;background:#d9d9d9"></div>
<div class="b" style="left:1062px;top:537px;width:1px;height:193px;background:#d9d9d9"></div>
<div class="b" style="left:1262px;top:537px;width:1px;height:193px;background:#d9d9d9"></div>
<div class="b" style="left:325px;top:543px;width:18px;height:18px;background:#fff;border:1px solid #d2d2d2;border-radius:4px"></div>
<svg class="i" style="left:881px;top:547px;" width="14" height="14" viewBox="0 0 14 14"><path d="M6.5 1.5 V12 M2 7.8 L6.5 12.3 L11 7.8" fill="none" stroke="#555" stroke-width="1.2"/></svg>
<div class="t" style="left:363px;top:544.17px;font-size:14.8px;line-height:18px;color:#555;font-weight:400;">ОКВЭД 2</div>
<div class="t" style="left:483px;top:544.17px;font-size:14.8px;line-height:18px;color:#555;font-weight:400;">ОКПД 2</div>
<div class="t" style="left:761px;top:544.17px;font-size:14.8px;line-height:18px;color:#555;font-weight:400;">Предмет закупки</div>
<div class="t" style="left:1078px;top:544.17px;font-size:14.8px;line-height:18px;color:#555;font-weight:400;">Минимально необход...</div>
<div class="t" style="left:1278px;top:544.17px;font-size:14.8px;line-height:18px;color:#555;font-weight:400;">Единица измерения</div>
<div class="t" style="left:309.5px;top:574.79px;font-size:13.6px;line-height:17px;color:#444;font-weight:700;">1</div>
<div class="b" style="left:324px;top:574px;width:18px;height:18px;background:#fff;border:1px solid #d2d2d2;border-radius:4px"></div>
<div class="t" style="left:363px;top:574.79px;font-size:13.6px;line-height:17px;color:#2f70b5;font-weight:400;">79.90.3/Деят...</div>
<div class="t" style="left:483px;top:574.79px;font-size:13.6px;line-height:17px;color:#2f70b5;font-weight:400;">96.09.19.126/Граверные работы по м...</div>
<div class="t" style="left:761px;top:574.79px;font-size:13.6px;line-height:17px;color:#555;font-weight:400;">Ремонтные работы</div>
<div class="t" style="left:1078px;top:574.79px;font-size:13.6px;line-height:17px;color:#555;font-weight:400;">Не указаны</div>
<div class="t" style="left:1278px;top:574.79px;font-size:13.6px;line-height:17px;color:#555;font-weight:400;">усл. ед</div>
<div class="t" style="left:309.5px;top:607.79px;font-size:13.6px;line-height:17px;color:#444;font-weight:700;">2</div>
<div class="b" style="left:324px;top:607px;width:18px;height:18px;background:#fff;border:1px solid #d2d2d2;border-radius:4px"></div>
<div class="t" style="left:363px;top:607.79px;font-size:13.6px;line-height:17px;color:#2f70b5;font-weight:400;">91.04.4/Деят...</div>
<div class="t" style="left:483px;top:607.79px;font-size:13.6px;line-height:17px;color:#2f70b5;font-weight:400;">96.09.19.127/Услуги по ремонту и изг...</div>
<div class="t" style="left:761px;top:607.79px;font-size:13.6px;line-height:17px;color:#555;font-weight:400;">Пачка бумаги А4</div>
<div class="t" style="left:1078px;top:607.79px;font-size:13.6px;line-height:17px;color:#555;font-weight:400;">Выполнены</div>
<div class="t" style="left:1278px;top:607.79px;font-size:13.6px;line-height:17px;color:#555;font-weight:400;">шт</div>
<div class="t" style="left:309.5px;top:639.79px;font-size:13.6px;line-height:17px;color:#444;font-weight:700;">3</div>
<div class="b" style="left:324px;top:639px;width:18px;height:18px;background:#fff;border:1px solid #d2d2d2;border-radius:4px"></div>
<div class="t" style="left:363px;top:639.79px;font-size:13.6px;line-height:17px;color:#2f70b5;font-weight:400;">91.04.5/Деят...</div>
<div class="t" style="left:483px;top:639.79px;font-size:13.6px;line-height:17px;color:#2f70b5;font-weight:400;">96.09.19.127/Услуги по ремонту и изг...</div>
<div class="t" style="left:761px;top:639.79px;font-size:13.6px;line-height:17px;color:#555;font-weight:400;">Бумага А4</div>
<div class="t" style="left:1078px;top:639.79px;font-size:13.6px;line-height:17px;color:#555;font-weight:400;">Выполнены</div>
<div class="t" style="left:1278px;top:639.79px;font-size:13.6px;line-height:17px;color:#555;font-weight:400;">шт</div>
<div class="t" style="left:309.5px;top:672.79px;font-size:13.6px;line-height:17px;color:#444;font-weight:700;">4</div>
<div class="b" style="left:324px;top:672px;width:18px;height:18px;background:#fff;border:1px solid #d2d2d2;border-radius:4px"></div>
<div class="t" style="left:363px;top:672.79px;font-size:13.6px;line-height:17px;color:#2f70b5;font-weight:400;">86,90/Деяте...</div>
<div class="t" style="left:483px;top:672.79px;font-size:13.6px;line-height:17px;color:#2f70b5;font-weight:400;">96.02.13.130/Услуги по педикюру</div>
<div class="t" style="left:761px;top:672.79px;font-size:13.6px;line-height:17px;color:#555;font-weight:400;">Бетон БСТ М100 B7.5 П3 F50 W2 (Гравий)</div>
<div class="t" style="left:1078px;top:672.79px;font-size:13.6px;line-height:17px;color:#555;font-weight:400;"></div>
<div class="t" style="left:1278px;top:672.79px;font-size:13.6px;line-height:17px;color:#555;font-weight:400;">кг</div>
<div class="t" style="left:309.5px;top:704.79px;font-size:13.6px;line-height:17px;color:#444;font-weight:700;">5</div>
<div class="b" style="left:324px;top:704px;width:18px;height:18px;background:#fff;border:1px solid #d2d2d2;border-radius:4px"></div>
<div class="t" style="left:363px;top:704.79px;font-size:13.6px;line-height:17px;color:#2f70b5;font-weight:400;">61.20.3/Деят...</div>
<div class="t" style="left:483px;top:704.79px;font-size:13.6px;line-height:17px;color:#2f70b5;font-weight:400;">96.02.13.114/Услуги по гигиеническо...</div>
<div class="t" style="left:761px;top:704.79px;font-size:13.6px;line-height:17px;color:#555;font-weight:400;">Бетон БСТ М100 B7.5 П3 F50 W2 (Гравий)</div>
<div class="t" style="left:1078px;top:704.79px;font-size:13.6px;line-height:17px;color:#555;font-weight:400;"></div>
<div class="t" style="left:1278px;top:704.79px;font-size:13.6px;line-height:17px;color:#555;font-weight:400;">кг</div>
</div>
<div class="b" style="left:301px;top:731px;width:1069px;height:17px;background:#f0f0f0"></div>
<div class="b" style="left:318px;top:731px;width:420px;height:17px;background:#c9c9c9"></div>
<svg class="i" style="left:301px;top:731px;" width="17" height="17" viewBox="0 0 17 17"><path d="M10.5 4.5 L6.5 8.5 L10.5 12.5" fill="none" stroke="#4f4f4f" stroke-width="2.2"/></svg>
<svg class="i" style="left:1353px;top:731px;" width="17" height="17" viewBox="0 0 17 17"><path d="M6.5 4.5 L10.5 8.5 L6.5 12.5" fill="none" stroke="#4f4f4f" stroke-width="2.2"/></svg>
<div class="b" style="left:270px;top:814px;width:1131px;height:186px;background:#fff;border-radius:4px;box-shadow:0 1px 4px rgba(0,0,0,0.2);overflow:hidden"><div class="b" style="left:0;top:0;width:100%;height:40px;background:#f4f4f4;border-bottom:1px solid #d6d6d6"></div></div>
<svg class="i" style="left:276px;top:825px;" width="6" height="18" viewBox="0 0 6 18"><circle cx="3" cy="3.9" r="1.75" fill="#555"/><circle cx="3" cy="9" r="1.75" fill="#555"/><circle cx="3" cy="14.1" r="1.75" fill="#555"/></svg>
<div class="t" style="left:290px;top:821.17px;font-size:20px;line-height:25px;color:#555;font-weight:400;">История согласования</div>
<svg class="i" style="left:1364px;top:828px;" width="14" height="12" viewBox="0 0 14 12"><path d="M1.3 9.2 L6.5 4 L11.7 9.2" fill="none" stroke="#4a4a4a" stroke-width="1.6"/></svg>
<div class="t" style="left:290px;top:868.97px;font-size:17.7px;line-height:22px;color:#555;font-weight:400;">История согласований</div>
<div class="b" style="left:285px;top:893px;width:1101px;height:30px;background:#f4f4f4;border-radius:4px"></div>
<svg class="i" style="left:1262px;top:898px;" width="18" height="18" viewBox="0 0 18 18"><path d="M2.4 9.2 A6.3 6.3 0 0 1 13.6 4.9" fill="none" stroke="#5a5a5a" stroke-width="1.35"/><path d="M15 8.4 A6.3 6.3 0 0 1 3.8 12.7" fill="none" stroke="#5a5a5a" stroke-width="1.35"/><path d="M15.6 2.0 L15.6 7.3 L10.3 7.3 Z" fill="#5a5a5a"/><path d="M1.8 15.6 L1.8 10.3 L7.1 10.3 Z" fill="#5a5a5a"/></svg>
<svg class="i" style="left:1292px;top:898px;" width="18" height="18" viewBox="0 0 18 18"><path d="M1.8 5.5 V1.8 H5.5 M11.7 1.8 H15.4 V5.5 M15.4 11.7 V15.4 H11.7 M5.5 15.4 H1.8 V11.7" fill="none" stroke="#5a5a5a" stroke-width="1.35"/></svg>
<svg class="i" style="left:1321px;top:897px;" width="20" height="20" viewBox="0 0 20 20"><path d="M8.5 3.5 H3.2 Q1.7 3.5 1.7 5 V16 Q1.7 17.5 3.2 17.5 H13.5 Q15 17.5 15 16 V11" fill="none" stroke="#5a5a5a" stroke-width="1.35"/><path d="M6.5 13.2 L7 10 L14.8 2.2 Q15.8 1.2 16.8 2.2 L17.3 2.7 Q18.3 3.7 17.3 4.7 L9.5 12.5 Z" fill="none" stroke="#5a5a5a" stroke-width="1.3" stroke-linejoin="round"/></svg>
<svg class="i" style="left:1342px;top:904px;" width="12" height="8" viewBox="0 0 12 8"><path d="M1.3 1.5 L5 5.2 L8.7 1.5" fill="none" stroke="#5a5a5a" stroke-width="1.2"/></svg>
<svg class="i" style="left:1361px;top:897px;" width="20" height="20" viewBox="0 0 20 20"><circle cx="8.2" cy="8.2" r="6.7" fill="none" stroke="#5a5a5a" stroke-width="1.35"/><path d="M12.9 12.9 L18 18" stroke="#5a5a5a" stroke-width="1.35"/></svg>
</body></html>
